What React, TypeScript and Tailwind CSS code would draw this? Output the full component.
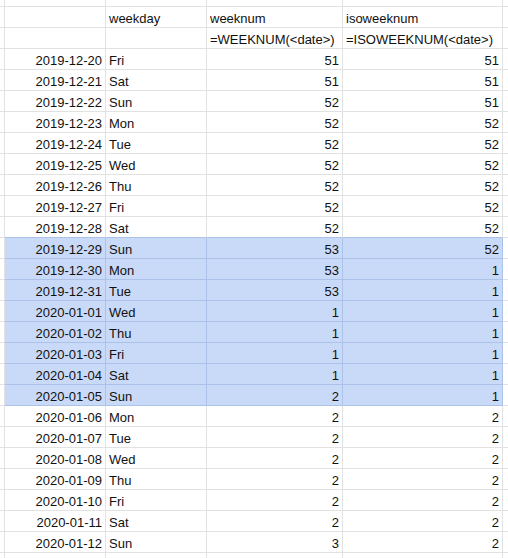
const rows: [string, string, number, number][] = [
  ['2019-12-20', 'Fri', 51, 51],
  ['2019-12-21', 'Sat', 51, 51],
  ['2019-12-22', 'Sun', 52, 51],
  ['2019-12-23', 'Mon', 52, 52],
  ['2019-12-24', 'Tue', 52, 52],
  ['2019-12-25', 'Wed', 52, 52],
  ['2019-12-26', 'Thu', 52, 52],
  ['2019-12-27', 'Fri', 52, 52],
  ['2019-12-28', 'Sat', 52, 52],
  ['2019-12-29', 'Sun', 53, 52],
  ['2019-12-30', 'Mon', 53, 1],
  ['2019-12-31', 'Tue', 53, 1],
  ['2020-01-01', 'Wed', 1, 1],
  ['2020-01-02', 'Thu', 1, 1],
  ['2020-01-03', 'Fri', 1, 1],
  ['2020-01-04', 'Sat', 1, 1],
  ['2020-01-05', 'Sun', 2, 1],
  ['2020-01-06', 'Mon', 2, 2],
  ['2020-01-07', 'Tue', 2, 2],
  ['2020-01-08', 'Wed', 2, 2],
  ['2020-01-09', 'Thu', 2, 2],
  ['2020-01-10', 'Fri', 2, 2],
  ['2020-01-11', 'Sat', 2, 2],
  ['2020-01-12', 'Sun', 3, 2],
];

function Cell({
  children,
  right,
  hl,
  blueBottom,
}: {
  children?: React.ReactNode;
  right?: boolean;
  hl?: boolean;
  blueBottom?: boolean;
}) {
  return (
    <div
      className={
        'h-[21px] flex items-end px-[3px] leading-[17px] border-r border-b whitespace-nowrap overflow-hidden ' +
        (right ? 'justify-end ' : '') +
        (hl ? 'bg-[#c9daf8] border-[#adc2e8] ' : blueBottom ? 'border-r-[#e2e2e2] border-b-[#adc2e8] ' : 'border-[#e2e2e2] ')
      }
    >
      {children}
    </div>
  );
}

function Edge({ tall }: { tall?: boolean }) {
  return <div className={(tall ? 'h-[21px] ' : '') + 'border-r border-b border-[#e2e2e2]'} />;
}

export default function App() {
  return (
    <div
      className="w-[508px] h-[558px] overflow-hidden bg-white text-[13px] text-[#111]"
      style={{ fontFamily: '"Liberation Sans", Arial, sans-serif' }}
    >
      <div className="grid grid-cols-[5px_101px_101px_136px_160px_1fr]">
        {/* partial top row */}
        <div className="h-[7px] border-r border-b border-[#e2e2e2]" />
        <div className="h-[7px] border-r border-b border-[#e2e2e2]" />
        <div className="h-[7px] border-r border-b border-[#e2e2e2]" />
        <div className="h-[7px] border-r border-b border-[#e2e2e2]" />
        <div className="h-[7px] border-r border-b border-[#e2e2e2]" />
        <div className="h-[7px] border-b border-[#e2e2e2]" />

        <Edge tall />
        <Cell />
        <Cell>weekday</Cell>
        <Cell>weeknum</Cell>
        <Cell>isoweeknum</Cell>
        <div className="h-[21px] border-b border-[#e2e2e2]" />

        <Edge tall />
        <Cell />
        <Cell />
        <Cell>=WEEKNUM(&lt;date&gt;)</Cell>
        <Cell>=ISOWEEKNUM(&lt;date&gt;)</Cell>
        <div className="h-[21px] border-b border-[#e2e2e2]" />

        {rows.map(([d, w, a, b], i) => {
          const hl = i >= 9 && i <= 16;
          const above = i === 8;
          return [
            <Edge tall key={d + 'e'} />,
            <Cell key={d + 'd'} right hl={hl} blueBottom={above}>{d}</Cell>,
            <Cell key={d + 'w'} hl={hl} blueBottom={above}>{w}</Cell>,
            <Cell key={d + 'a'} right hl={hl} blueBottom={above}>{a}</Cell>,
            <Cell key={d + 'b'} right hl={hl} blueBottom={above}>{b}</Cell>,
            <div key={d + 'x'} className="h-[21px] border-b border-[#e2e2e2]" />,
          ];
        })}

        {/* partial bottom row */}
        <div className="h-[6px] border-r border-[#e2e2e2]" />
        <div className="h-[6px] border-r border-[#e2e2e2]" />
        <div className="h-[6px] border-r border-[#e2e2e2]" />
        <div className="h-[6px] border-r border-[#e2e2e2]" />
        <div className="h-[6px] border-r border-[#e2e2e2]" />
        <div className="h-[6px]" />
      </div>
    </div>
  );
}
